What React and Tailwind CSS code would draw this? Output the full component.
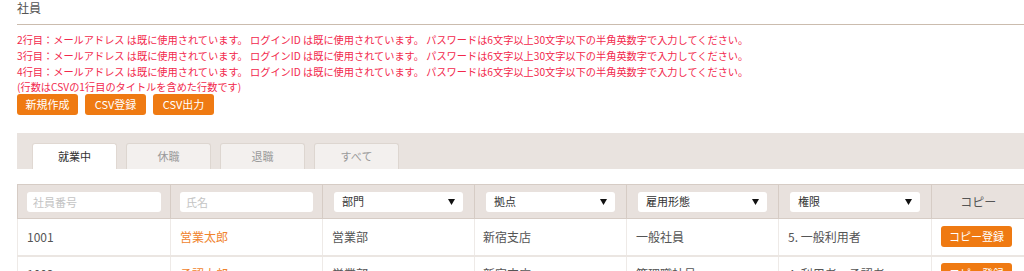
import React, { useState } from "react";

const errors = [
    "2行目：メールアドレス は既に使用されています。 ログインID は既に使用されています。 パスワードは6文字以上30文字以下の半角英数字で入力してください。",
    "3行目：メールアドレス は既に使用されています。 ログインID は既に使用されています。 パスワードは6文字以上30文字以下の半角英数字で入力してください。",
    "4行目：メールアドレス は既に使用されています。 ログインID は既に使用されています。 パスワードは6文字以上30文字以下の半角英数字で入力してください。",
];

const tabs = ["就業中", "休職", "退職", "すべて"];

const rows = [
    { no: "1001", name: "営業太郎", dept: "営業部", base: "新宿支店", type: "一般社員", role: "5. 一般利用者" },
    { no: "1002", name: "承認太郎", dept: "営業部", base: "新宿支店", type: "管理職社員", role: "4. 利用者・承認者" },
];

// Header dropdown cell
const SelectBox = ({ label }) => (
    <div className="h-[20px] bg-white rounded-[3px] flex items-center justify-between pl-[8px] pr-[8px] text-[11px] text-[#333]">
        <span>{label}</span>
        <svg width="7" height="6" viewBox="0 0 7 6">
            <path d="M0 0 L7 0 L3.5 6 Z" fill="#111" />
        </svg>
    </div>
);

const InputBox = ({ placeholder }) => (
    <input
        className="w-full h-[20px] bg-white rounded-[3px] px-[6px] text-[11px] text-[#333] placeholder:text-[#c4c4c4] outline-none"
        placeholder={placeholder}
    />
);

export default function App() {
    const [activeTab, setActiveTab] = useState(0);

    return (
        <div className="w-[1024px] h-[271px] overflow-hidden bg-white font-['Noto_Sans_CJK_JP','Noto_Sans',sans-serif]">
            <div className="pl-[17px]">
                {/* Title */}
                <div className="h-[24px] pt-[1px] text-[12px] leading-[14px] text-[#555]">社員</div>
                <div className="h-px bg-[#cbbcae]" />

                {/* Errors */}
                <div className="pt-[7px] text-[10.2px] leading-[16px] text-[#f2284c]">
                    {errors.map((e) => (
                        <div key={e} className="whitespace-nowrap">{e}</div>
                    ))}
                    <div className="leading-[13px]">(行数はCSVの1行目のタイトルを含めた行数です)</div>
                </div>

                {/* Action buttons */}
                <div className="flex gap-[7px] mt-[1px]">
                    {["新規作成", "CSV登録", "CSV出力"].map((b) => (
                        <button
                            key={b}
                            className="w-[61px] h-[21px] rounded-[3px] bg-[#ef7a12] text-white text-[11px] leading-[21px]"
                        >
                            {b}
                        </button>
                    ))}
                </div>

                {/* Tabs */}
                <div className="mt-[18px] h-[36px] bg-[#e9e3df] flex items-end pl-[15px] gap-[9px]">
                    {tabs.map((t, i) => (
                        <button
                            key={t}
                            onClick={() => setActiveTab(i)}
                            className={`w-[85px] h-[26px] rounded-t-[3px] border border-b-0 text-[11px] ${
                                activeTab === i
                                    ? "bg-white border-[#e0d8d2] text-[#333]"
                                    : "bg-[#f3f0ee] border-[#ddd6d0] text-[#9a9a9a]"
                            }`}
                        >
                            {t}
                        </button>
                    ))}
                </div>

                {/* Table */}
                <table className="mt-[15px] border-collapse table-fixed w-[1007px] text-[12px] text-[#555]">
                    <colgroup>
                        <col className="w-[153px]" />
                        <col className="w-[152px]" />
                        <col className="w-[152px]" />
                        <col className="w-[152px]" />
                        <col className="w-[152px]" />
                        <col className="w-[153px]" />
                        <col className="w-[93px]" />
                    </colgroup>
                    <thead>
                        <tr className="h-[34px] bg-[#e8e1dd] border-t border-b border-[#d6ccc5]">
                            <th className="border-l border-r border-[#d6ccc5] px-[9px] font-normal">
                                <InputBox placeholder="社員番号" />
                            </th>
                            <th className="border-r border-[#d6ccc5] px-[9px] font-normal">
                                <InputBox placeholder="氏名" />
                            </th>
                            <th className="border-r border-[#d6ccc5] px-[11px] font-normal text-left">
                                <SelectBox label="部門" />
                            </th>
                            <th className="border-r border-[#d6ccc5] px-[11px] font-normal text-left">
                                <SelectBox label="拠点" />
                            </th>
                            <th className="border-r border-[#d6ccc5] px-[11px] font-normal text-left">
                                <SelectBox label="雇用形態" />
                            </th>
                            <th className="border-r border-[#d6ccc5] px-[11px] font-normal text-left">
                                <SelectBox label="権限" />
                            </th>
                            <th className="font-normal text-[12px] text-[#555] text-center">コピー</th>
                        </tr>
                    </thead>
                    <tbody>
                        {rows.map((r) => (
                            <tr key={r.no} className="h-[37px] border-b-2 border-[#ebe6e2]">
                                <td className="border-l border-r border-[#eeeae7] pl-[9px]">{r.no}</td>
                                <td className="border-r border-[#eeeae7] pl-[9px] text-[#f0842e]">{r.name}</td>
                                <td className="border-r border-[#eeeae7] pl-[9px]">{r.dept}</td>
                                <td className="border-r border-[#eeeae7] pl-[8px]">{r.base}</td>
                                <td className="border-r border-[#eeeae7] pl-[9px]">{r.type}</td>
                                <td className="border-r border-[#eeeae7] pl-[9px]">{r.role}</td>
                                <td className="pl-[9px] pb-[1px]">
                                    <button className="w-[71px] h-[21px] rounded-[3px] bg-[#ef7a12] text-white text-[11px]">
                                        コピー登録
                                    </button>
                                </td>
                            </tr>
                        ))}
                    </tbody>
                </table>
            </div>
        </div>
    );
}
